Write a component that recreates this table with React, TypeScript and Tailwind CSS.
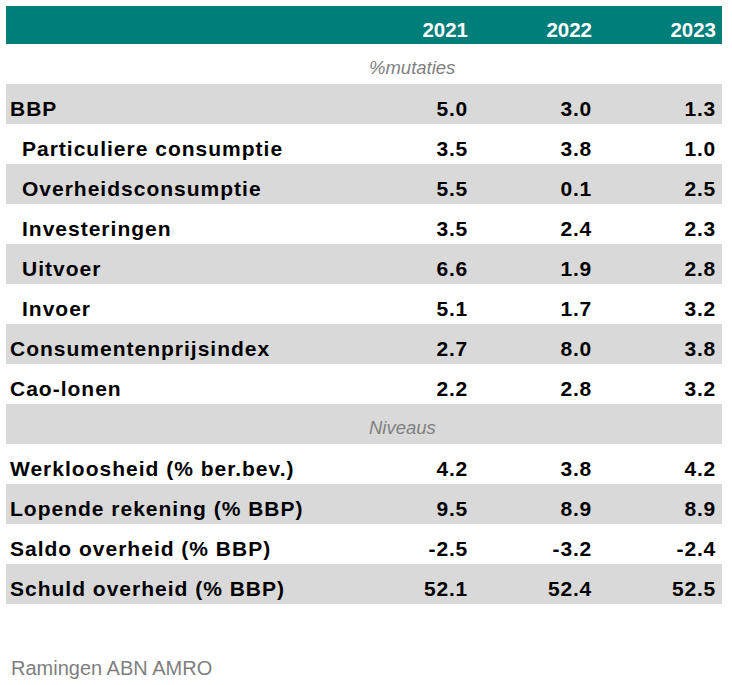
const rows: { label: string; values: string[]; indent?: boolean; section?: string }[] = [
  { label: "", values: [], section: "%mutaties" },
  { label: "BBP", values: ["5.0", "3.0", "1.3"] },
  { label: "Particuliere consumptie", values: ["3.5", "3.8", "1.0"], indent: true },
  { label: "Overheidsconsumptie", values: ["5.5", "0.1", "2.5"], indent: true },
  { label: "Investeringen", values: ["3.5", "2.4", "2.3"], indent: true },
  { label: "Uitvoer", values: ["6.6", "1.9", "2.8"], indent: true },
  { label: "Invoer", values: ["5.1", "1.7", "3.2"], indent: true },
  { label: "Consumentenprijsindex", values: ["2.7", "8.0", "3.8"] },
  { label: "Cao-lonen", values: ["2.2", "2.8", "3.2"] },
  { label: "", values: [], section: "Niveaus" },
  { label: "Werkloosheid (% ber.bev.)", values: ["4.2", "3.8", "4.2"] },
  { label: "Lopende rekening (% BBP)", values: ["9.5", "8.9", "8.9"] },
  { label: "Saldo overheid (% BBP)", values: ["-2.5", "-3.2", "-2.4"] },
  { label: "Schuld overheid (% BBP)", values: ["52.1", "52.4", "52.5"] },
];

export default function App() {
  return (
    <div
      className="h-[685px] w-[732px] bg-white pl-[6px] pt-[6px]"
      style={{ fontFamily: '"Liberation Sans", Arial, sans-serif' }}
    >
      <div className="w-[716px]">
        <div className="grid h-[38px] grid-cols-[1fr_124px_124px_124px] bg-[#007e7a] pr-[6px] pt-[14px] text-[20.5px] font-bold leading-[20px] text-white">
          <div />
          <div className="text-right">2021</div>
          <div className="text-right">2022</div>
          <div className="text-right">2023</div>
        </div>

        {rows.map((row, i) => {
          const gray = i % 2 === 1;
          const bg = gray ? "bg-[#d9d9d9]" : "bg-white";
          if (row.section) {
            return (
              <div key={i} className={`h-[40px] ${bg} pl-[363px] pt-[14px] text-[18.5px] italic leading-[20px] text-[#808080]`}>
                {row.section}
              </div>
            );
          }
          return (
            <div
              key={i}
              className={`grid h-[40px] grid-cols-[1fr_124px_124px_124px] ${bg} pr-[6px] pt-[15px] text-[21px] font-bold leading-[20px] text-black`}
            >
              <div className={`${row.indent ? "pl-[16px]" : "pl-[4px]"} tracking-[1px]`}>{row.label}</div>
              {row.values.map((v, j) => (
                <div key={j} className="text-right tracking-[0.8px]">
                  {v}
                </div>
              ))}
            </div>
          );
        })}

        <div className="mt-[54px] pl-[5px] text-[20px] leading-[20px] text-[#7f7f7f]">Ramingen ABN AMRO</div>
      </div>
    </div>
  );
}
